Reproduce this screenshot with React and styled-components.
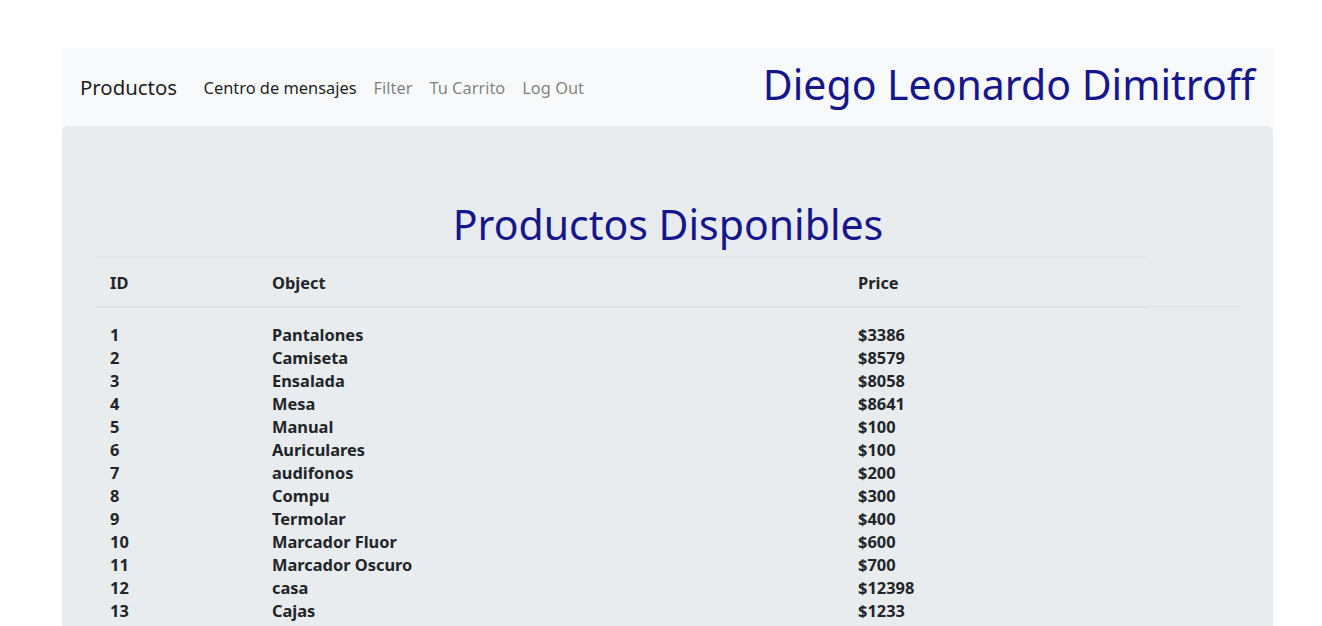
import React from "react";
import styled, { createGlobalStyle } from "styled-components";

const GlobalStyle = createGlobalStyle`
  body {
    margin: 0;
    background: #ffffff;
    font-family: "Noto Sans", "Open Sans", sans-serif;
    color: #212529;
  }
`;

const products = [
  { id: 1, name: "Pantalones", price: 3386 },
  { id: 2, name: "Camiseta", price: 8579 },
  { id: 3, name: "Ensalada", price: 8058 },
  { id: 4, name: "Mesa", price: 8641 },
  { id: 5, name: "Manual", price: 100 },
  { id: 6, name: "Auriculares", price: 100 },
  { id: 7, name: "audifonos", price: 200 },
  { id: 8, name: "Compu", price: 300 },
  { id: 9, name: "Termolar", price: 400 },
  { id: 10, name: "Marcador Fluor", price: 600 },
  { id: 11, name: "Marcador Oscuro", price: 700 },
  { id: 12, name: "casa", price: 12398 },
  { id: 13, name: "Cajas", price: 1233 },
];

const links = [
  { label: "Centro de mensajes", active: true },
  { label: "Filter" },
  { label: "Tu Carrito" },
  { label: "Log Out" },
];

const App = () => {
  return (
    <>
      <GlobalStyle />
      <Page>
        <NavBar>
          <Brand>Productos</Brand>
          <NavLinks>
            {links.map((l) => (
              <NavLink key={l.label} $active={l.active}>
                {l.label}
              </NavLink>
            ))}
          </NavLinks>
          <UserName>Diego Leonardo Dimitroff</UserName>
        </NavBar>
        <Jumbotron>
          <Title>Productos Disponibles</Title>
          <Table>
            <HeadRow>
              <Cell>ID</Cell>
              <Cell>Object</Cell>
              <Cell>Price</Cell>
            </HeadRow>
            <HeadTail />
            <Body>
              {products.map((p) => (
                <Row key={p.id}>
                  <BodyCell>{p.id}</BodyCell>
                  <BodyCell>{p.name}</BodyCell>
                  <BodyCell>${p.price}</BodyCell>
                </Row>
              ))}
            </Body>
          </Table>
        </Jumbotron>
      </Page>
    </>
  );
};

export default App;

const Page = styled.div`
  width: 1211px;
  padding: 48px 0 0 62px;
`;

const NavBar = styled.nav`
  height: 78px;
  background: #f8f9fa;
  display: flex;
  align-items: center;
  padding: 0 18px;
`;

const Brand = styled.span`
  font-size: 20.4px;
  color: rgba(0, 0, 0, 0.9);
  margin-right: 18px;
`;

const NavLinks = styled.div`
  display: flex;
  flex: 1;
`;

const NavLink = styled.span`
  font-size: 16.4px;
  padding: 0 8.5px;
  color: ${(p) => (p.$active ? "rgba(0, 0, 0, 0.9)" : "rgba(0, 0, 0, 0.5)")};
`;

const UserName = styled.h1`
  margin: 0 0 5px;
  font-size: 41px;
  font-weight: 400;
  color: #16168c;
  line-height: 1.2;
`;

const Jumbotron = styled.div`
  background: #e9ecef;
  border-radius: 5px;
  padding: 64px 33px 40px 34px;
`;

const Title = styled.h1`
  margin: 10px 0 8px;
  text-align: center;
  font-size: 41px;
  font-weight: 400;
  line-height: 49px;
  color: #16168c;
`;

const Table = styled.div`
  display: flex;
  flex-wrap: wrap;
  width: 1144px;
`;

const columns = "164px 586px 301px";

const HeadRow = styled.div`
  display: grid;
  grid-template-columns: ${columns};
  border-top: 1px solid #dee2e6;
  border-bottom: 2px solid #dee2e6;
`;

const HeadTail = styled.div`
  flex: 1;
  align-self: flex-end;
  border-bottom: 1px solid #dee2e6;
  margin-bottom: 1px;
`;

const Cell = styled.div`
  padding: 13px 12px 11px;
  font-size: 16.4px;
  font-weight: 700;
  line-height: 24px;

  &:first-child {
    padding-left: 14px;
  }
`;

const Body = styled.div`
  width: 100%;
  padding-top: 15px;
`;

const Row = styled.div`
  display: grid;
  grid-template-columns: ${columns};
`;

const BodyCell = styled.div`
  padding: 0 12px;
  font-size: 16.4px;
  font-weight: 700;
  line-height: 23px;

  &:first-child {
    padding-left: 14px;
  }
`;
